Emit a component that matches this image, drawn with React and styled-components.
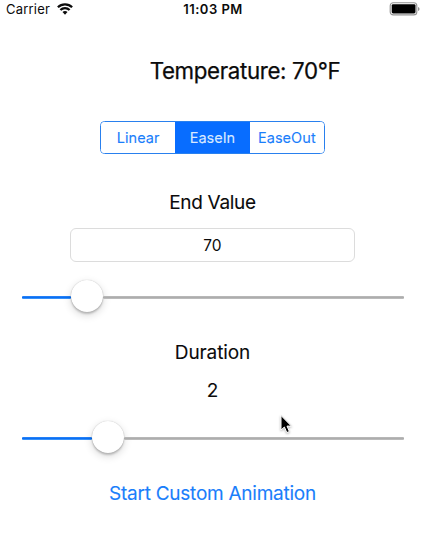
import React, { useState } from "react";
import styled, { createGlobalStyle } from "styled-components";

const GlobalStyle = createGlobalStyle`
  * { box-sizing: border-box; }
  body {
    margin: 0;
    background: #fff;
    color: #0b0b0b;
    font-family: Inter, "Liberation Sans", sans-serif;
  }
`;

const Screen = styled.main`
  position: relative;
  width: 422px;
  height: 536px;
  display: flex;
  flex-direction: column;
  background: #fff;
  overflow: hidden;
`;

const StatusBar = styled.header`
  height: 18px;
  display: grid;
  grid-template-columns: 1fr auto 1fr;
  align-items: center;
  padding: 0 2px 0 6px;
  font-size: 13px;
  line-height: 18px;
`;

const Carrier = styled.div`
  display: flex;
  align-items: center;
  gap: 7px;
  letter-spacing: 0.2px;
`;

const Clock = styled.div`
  font-weight: 600;
  letter-spacing: 0.5px;
`;

const Battery = styled.svg`
  justify-self: end;
  display: block;
`;

const Text = styled.div`
  margin-top: ${(p) => p.$gap}px;
  height: 28px;
  line-height: 28px;
  font-size: ${(p) => p.$size}px;
  letter-spacing: ${(p) => p.$spacing || 0}px;
  text-align: center;
  padding-left: ${(p) => p.$indent || 0}px;
  white-space: nowrap;
  -webkit-text-stroke: ${(p) => p.$stroke || 0.1}px currentColor;
`;

const Segments = styled.div`
  display: flex;
  width: 225px;
  height: 33px;
  margin: 36px 0 0 100px;
  border: 1px solid #2980ee;
  border-radius: 4.5px;
  overflow: hidden;
`;

const Segment = styled.button`
  flex: 1;
  padding: 0;
  border: 0;
  background: ${(p) => (p.$active ? "#086dff" : "#fff")};
  color: ${(p) => (p.$active ? "#d9e9ff" : "#1a7efb")};
  font: 400 14.5px/31px Inter, sans-serif;
  letter-spacing: ${(p) => p.$spacing}px;
  -webkit-text-stroke: 0.1px currentColor;
`;

const ValueField = styled.input`
  width: 285px;
  height: 34px;
  margin: 11px 0 0 70px;
  padding: 0;
  border: 1px solid #dcdcdc;
  border-radius: 6px;
  background: #fff;
  color: #0b0b0b;
  font: 400 15.5px Inter, sans-serif;
  text-align: center;
  outline: 0;
`;

const SliderRow = styled.div`
  display: flex;
  align-items: center;
  width: 381.5px;
  height: 32px;
  margin: ${(p) => p.$gap}px 0 0 22px;
`;

const Track = styled.div`
  width: ${(p) => (p.$width ? `${p.$width}px` : "auto")};
  flex: ${(p) => (p.$width ? "none" : "1")};
  height: 3px;
  margin-top: 3px;
  border-radius: 1px;
  background: ${(p) =>
    p.$filled
      ? "linear-gradient(#2f88f7, #0b6ff4 50%, #4ca2fc)"
      : "linear-gradient(#bcbcbc, #adadad 50%, #c2c2c2)"};
`;

const Thumb = styled.div`
  flex: none;
  width: 32px;
  height: 32px;
  border-radius: 50%;
  background: #fff;
  box-shadow: 0 0 1px rgba(0, 0, 0, 0.28), 0 2px 2px rgba(0, 0, 0, 0.18),
    0 3px 9px rgba(0, 0, 0, 0.16);
`;

const StartButton = styled.button`
  align-self: center;
  height: 28px;
  margin: 27px 0 0 3px;
  padding: 0;
  border: 0;
  background: none;
  color: #1a7efb;
  font: 400 19px/28px Inter, sans-serif;
  letter-spacing: -0.25px;
  white-space: nowrap;
  -webkit-text-stroke: 0.1px currentColor;
`;

const Pointer = styled.svg`
  position: absolute;
  left: 279px;
  top: 414px;
  filter: drop-shadow(0 1px 1px rgba(0, 0, 0, 0.3));
`;

function Wifi() {
  return (
    <svg width="16" height="12" viewBox="0 0 16 12" fill="none" stroke="#0b0b0b" strokeWidth="2.3">
      <path d="M0.9 4.2C4.8 0.4 11.2 0.4 15.1 4.2" />
      <path d="M3.4 7C6 4.5 10 4.5 12.6 7" />
      <path d="M5.5 9.1C7 7.7 9 7.7 10.5 9.1L8 11.7Z" fill="#0b0b0b" stroke="none" />
    </svg>
  );
}

function BatteryIcon() {
  return (
    <Battery width="31" height="14" viewBox="0 0 31 14">
      <rect x="1.2" y="0.7" width="26.6" height="12.2" rx="3" fill="none" stroke="#929292" strokeWidth="1.1" />
      <rect x="2.7" y="2.2" width="23.8" height="9.2" rx="1.4" fill="#000" />
      <path d="M29 4.9Q30.6 5.5 30.6 6.9Q30.6 8.3 29 8.9Z" fill="#929292" />
    </Battery>
  );
}

const curves = [
  { name: "Linear", spacing: 0.05 },
  { name: "EaseIn", spacing: 0 },
  { name: "EaseOut", spacing: 0.05 },
];

function Slider({ filled, gap }) {
  return (
    <SliderRow $gap={gap}>
      <Track $filled $width={filled} />
      <Thumb />
      <Track />
    </SliderRow>
  );
}

export default function App() {
  const [curve, setCurve] = useState("EaseIn");
  const [value, setValue] = useState("70");
  return (
    <>
      <GlobalStyle />
      <Screen>
        <StatusBar>
          <Carrier>Carrier <Wifi /></Carrier>
          <Clock>11:03 PM</Clock>
          <BatteryIcon />
        </StatusBar>
        <Text $gap={39} $size={22.3} $indent={68} $spacing={-0.35} $stroke={0.25}>Temperature: 70°F</Text>
        <Segments>
          {curves.map(({ name, spacing }) => (
            <Segment key={name} $active={curve === name} $spacing={spacing} onClick={() => setCurve(name)}>
              {name}
            </Segment>
          ))}
        </Segments>
        <Text $gap={35} $size={19} $indent={3} $spacing={-0.3}>End Value</Text>
        <ValueField value={value} onChange={(e) => setValue(e.target.value)} />
        <Slider gap={18} filled={49.3} />
        <Text $gap={27} $size={19} $indent={3} $spacing={-0.1}>Duration</Text>
        <Text $gap={10} $size={19} $indent={3}>2</Text>
        <Slider gap={16} filled={69.7} />
        <StartButton>Start Custom Animation</StartButton>
        <Pointer width="14" height="21" viewBox="0 0 14 21">
          <path d="M2 1.5V16L5.4 13L7.8 18.6L10.4 17.5L8 12.1H12.4Z" fill="#000" stroke="#fff" strokeWidth="1" />
        </Pointer>
      </Screen>
    </>
  );
}
